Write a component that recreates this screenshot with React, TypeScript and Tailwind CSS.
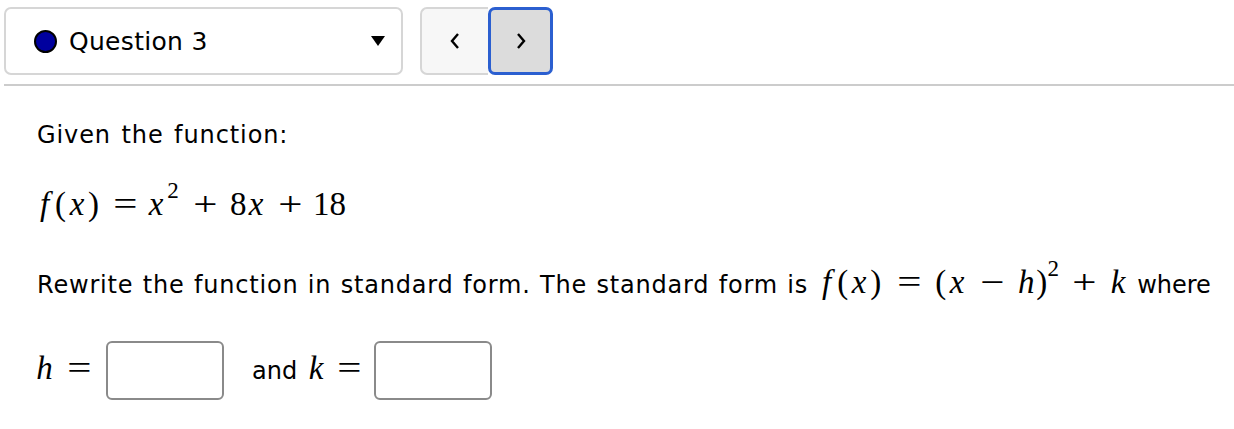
import React from "react";

const T = ({ c, children }: { c: string; children?: React.ReactNode }) => (
  <span className={"inline-block text-center " + c}>{children}</span>
);

const Op = ({ children }: { children: React.ReactNode }) => (
  <span className="inline-block scale-x-[1.3]">{children}</span>
);

const Sup = ({ children }: { children: React.ReactNode }) => (
  <span className="relative -top-[17px] text-[23px]">{children}</span>
);

const mathFont = "font-['Liberation_Serif',serif] text-[33px] leading-[40px]";

export default function App() {
  return (
    <div className="w-[1234px] h-[429px] bg-white text-black font-['DejaVu_Sans',sans-serif] overflow-hidden">
      {/* top bar */}
      <div className="flex items-start pt-[7px] pl-[4px]">
        <div className="w-[399px] h-[68px] border-2 border-[#d6d6d6] rounded-[7px] flex items-center pl-[28px] pr-[16px]">
          <span className="w-[23px] h-[23px] rounded-full bg-[#00009e] border-[2.5px] border-black shrink-0" />
          <span className="ml-[12px] text-[25px] tracking-[0.3px] leading-none">Question 3</span>
          <span className="ml-auto">
            <svg width="14" height="10" viewBox="0 0 14 10">
              <polygon points="0,0 14,0 7,10" fill="#000" />
            </svg>
          </span>
        </div>
        <div className="ml-[17px] flex h-[68px]">
          <button className="w-[68px] h-[68px] bg-[#f7f7f7] border-2 border-r-0 border-[#d6d6d6] rounded-l-[7px] flex items-center justify-center">
            <svg width="12" height="18" viewBox="0 0 12 18">
              <polyline points="9,2 3,9 9,16" fill="none" stroke="#000" strokeWidth="2.4" />
            </svg>
          </button>
          <button className="w-[65px] h-[68px] bg-[#dcdcdc] border-[3px] border-[#2b5fd0] rounded-[7px] flex items-center justify-center">
            <svg width="12" height="18" viewBox="0 0 12 18">
              <polyline points="3,2 9,9 3,16" fill="none" stroke="#000" strokeWidth="2.4" />
            </svg>
          </button>
        </div>
      </div>
      <div className="ml-[4px] mt-[9px] h-[2px] bg-[#cccccc]" />

      {/* content */}
      <div className="pl-[37px]">
        <div className="mt-[35px] text-[24px] leading-[28px] tracking-[0.9px] [word-spacing:2px]">
          Given the function:
        </div>

        <div className={"mt-[35px] h-[40px] whitespace-nowrap " + mathFont}>
          <T c="-ml-[1px] w-[17px] italic">f</T>
          <T c="ml-[2px] w-[10px]">(</T>
          <T c="ml-[2px] w-[20px] italic">x</T>
          <T c="ml-[1px] w-[10px]">)</T>
          <T c="ml-[15px] w-[24px]"><Op>=</Op></T>
          <T c="ml-[9px] w-[20px] italic">x</T>
          <T c="ml-[1px] w-[12px]"><Sup>2</Sup></T>
          <T c="ml-[14px] w-[24px]"><Op>+</Op></T>
          <T c="ml-[13px] w-[15px]">8</T>
          <T c="w-[22px] italic">x</T>
          <T c="ml-[11px] w-[24px]"><Op>+</Op></T>
          <T c="ml-[11px] w-[27px]">18</T>
        </div>

        <div className="mt-[38px] h-[40px] whitespace-nowrap text-[24px] leading-[40px]">
          <span className="tracking-[0.8px] [word-spacing:1px]">
            Rewrite the function in standard form. The standard form is
          </span>
          <span className={"ml-[10px] " + mathFont}>
            <T c="w-[17px] italic">f</T>
            <T c="ml-[2px] w-[10px]">(</T>
            <T c="ml-[2px] w-[20px] italic">x</T>
            <T c="ml-[1px] w-[10px]">)</T>
            <T c="ml-[17px] w-[24px]"><Op>=</Op></T>
            <T c="ml-[14px] w-[10px]">(</T>
            <T c="ml-[2px] w-[20px] italic">x</T>
            <T c="ml-[13px] w-[24px]"><Op>−</Op></T>
            <T c="ml-[13px] w-[18px] italic">h</T>
            <T c="ml-[1px] w-[10px]">)</T>
            <T c="ml-[1px] w-[12px]"><Sup>2</Sup></T>
            <T c="ml-[13px] w-[24px]"><Op>+</Op></T>
            <T c="ml-[13px] w-[18px] italic">k</T>
          </span>
          <span className="ml-[10px]">where</span>
        </div>

        <div className="mt-[39px] flex items-center whitespace-nowrap">
          <span className={"mb-[6px] " + mathFont}>
            <T c="-ml-[1px] w-[17px] italic">h</T>
            <T c="ml-[14px] w-[25px]"><Op>=</Op></T>
          </span>
          <input
            type="text"
            className="ml-[14px] w-[118px] h-[59px] border-2 border-[#8a8a8a] rounded-[6px] bg-white outline-none"
          />
          <span className="ml-[28px] text-[24px] leading-[28px]">and</span>
          <span className={"mb-[6px] " + mathFont}>
            <T c="ml-[11px] w-[16px] italic">k</T>
            <T c="ml-[13px] w-[24px]"><Op>=</Op></T>
          </span>
          <input
            type="text"
            className="ml-[13px] w-[118px] h-[59px] border-2 border-[#8a8a8a] rounded-[6px] bg-white outline-none"
          />
        </div>
      </div>
    </div>
  );
}
